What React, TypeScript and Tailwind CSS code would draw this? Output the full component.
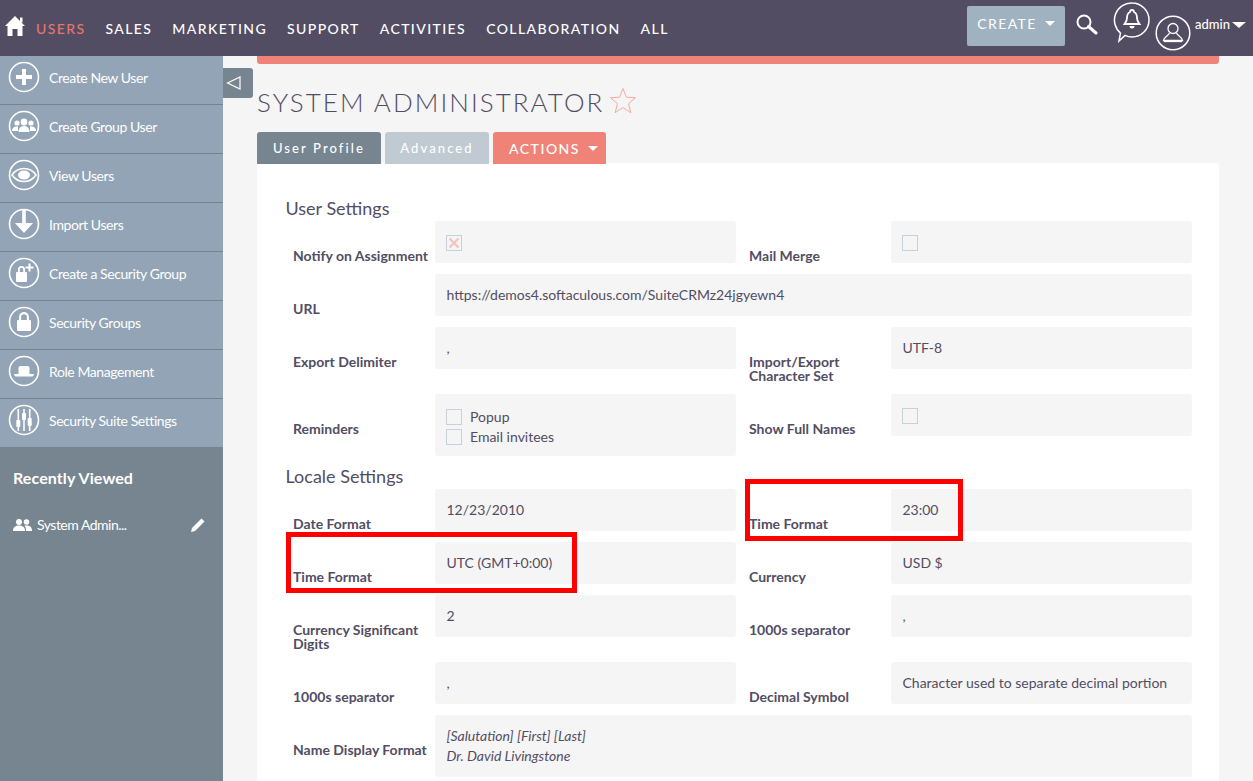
import React from "react";

const Circle: React.FC<{ children: React.ReactNode }> = ({ children }) => (
  <svg width="32" height="32" viewBox="0 0 32 32" className="shrink-0">
    <circle cx="16" cy="16" r="14.5" fill="none" stroke="#fff" strokeWidth="1.6" />
    {children}
  </svg>
);

const sideItems: { label: string; icon: React.ReactNode }[] = [
  {
    label: "Create New User",
    icon: <path d="M14 8h4v6h6v4h-6v6h-4v-6H8v-4h6z" fill="#fff" />,
  },
  {
    label: "Create Group User",
    icon: (
      <g fill="#fff">
        <circle cx="9" cy="13" r="2.6" />
        <circle cx="23" cy="13" r="2.6" />
        <path d="M4 21c0-3 2-4.500 4-4.500h2V21z" />
        <path d="M28 21c0-3-2-4.500-4-4.500h-2V21z" />
        <circle cx="16" cy="12" r="3.400" />
        <path d="M10.500 22c0-4 2.500-6 5.500-6s5.500 2 5.500 6z" />
      </g>
    ),
  },
  {
    label: "View Users",
    icon: (
      <g>
        <path d="M4 16c3-4.500 7.500-6.500 12-6.500S25 11.500 28 16c-3 4.500-7.500 6.500-12 6.500S7 20.500 4 16z" fill="none" stroke="#fff" strokeWidth="1.6" />
        <ellipse cx="16" cy="16" rx="6" ry="4.500" fill="#fff" />
      </g>
    ),
  },
  {
    label: "Import Users",
    icon: <path d="M14.200 1.500h3.600V15H25l-9 10-9-10h7.200z" fill="#fff" />,
  },
  {
    label: "Create a Security Group",
    icon: (
      <g fill="#fff">
        <rect x="8" y="15" width="11" height="10" rx="1" />
        <path d="M10 15v-2.500a3.500 3.500 0 0 1 7 0V15h-1.800v-2.500a1.700 1.700 0 0 0-3.400 0V15z" />
        <path d="M20.500 6.500h2v3h3v2h-3v3h-2v-3h-3v-2h3z" />
      </g>
    ),
  },
  {
    label: "Security Groups",
    icon: (
      <g fill="#fff">
        <rect x="9" y="14" width="14" height="11" rx="1" />
        <path d="M11 14v-3a5 5 0 0 1 10 0v3h-2.200v-3a2.800 2.800 0 0 0-5.600 0v3z" />
      </g>
    ),
  },
  {
    label: "Role Management",
    icon: (
      <g fill="#fff">
        <path d="M10.500 19v-6c0-1 .7-2 2-2h7c1.300 0 2 1 2 2v6z" />
        <path d="M6 19h20c0 1.500-1 2.500-2 2.500H8c-1 0-2-1-2-2.500z" />
      </g>
    ),
  },
  {
    label: "Security Suite Settings",
    icon: (
      <g fill="#fff">
        <rect x="9.500" y="5" width="1.600" height="22" />
        <rect x="15.200" y="5" width="1.600" height="22" />
        <rect x="20.900" y="5" width="1.600" height="22" />
        <rect x="8.300" y="16" width="4" height="7" rx="0.800" />
        <rect x="14" y="9" width="4" height="7" rx="0.800" />
        <rect x="19.700" y="14" width="4" height="8" rx="0.800" />
      </g>
    ),
  },
];

const navItems = ["SALES", "MARKETING", "SUPPORT", "ACTIVITIES", "COLLABORATION", "ALL"];

const TopBar = () => (
  <header className="h-[56px] shrink-0 bg-[#534d64] flex items-start">
    <svg width="22" height="22" viewBox="0 0 22 22" className="ml-[4px] mt-[15px] shrink-0">
      <path d="M11 1 L21 11 H18.500 V21 H13.500 V14 H8.500 V21 H3.500 V11 H1 Z" fill="#fff" />
      <rect x="16" y="2.500" width="2.500" height="5" fill="#fff" />
    </svg>
    <nav className="flex gap-[20px] ml-[10px] mt-[20px] text-[14px] leading-[18px] tracking-[1.4px] font-medium text-white">
      <span className="text-[#e2766f]">USERS</span>
      {navItems.map((n) => (
        <span key={n}>{n}</span>
      ))}
    </nav>
    <div className="ml-auto flex items-start">
      <button className="mt-[6px] w-[98px] h-[40px] pb-[5px] rounded-[2px] bg-[#a0b2bf] text-white text-[14px] tracking-[1.4px] flex items-center justify-center gap-[8px]">
        CREATE
        <span className="w-0 h-0 border-x-[5.5px] border-x-transparent border-t-[5px] border-t-white" />
      </button>
      <svg width="24" height="22" viewBox="0 0 24 22" className="ml-[10px] mt-[13px]">
        <circle cx="9" cy="9" r="6.500" fill="none" stroke="#fff" strokeWidth="2" />
        <path d="M13.500 13.500 L21 20" stroke="#fff" strokeWidth="3" strokeLinecap="round" />
      </svg>
      <svg width="38" height="42" viewBox="0 0 38 42" className="ml-[14px] mt-[1px]">
        <path d="M19 2a17 17 0 0 1 0 34 17 17 0 0 1-7-1.600L6 40l1.500-8A17 17 0 0 1 19 2z" fill="none" stroke="#fff" strokeWidth="1.500" />
        <path d="M19 9a2 2 0 0 1 2 2c2.500 1 3 3 3 6 0 3 1 4 2.500 6h-15C13 21 14 20 14 17c0-3 .5-5 3-6a2 2 0 0 1 2-2z" fill="none" stroke="#fff" strokeWidth="1.800" />
        <path d="M16.500 25h5a2.500 2.500 0 0 1-5 0z" fill="#fff" />
      </svg>
      <svg width="36" height="36" viewBox="0 0 36 36" className="ml-[4px] mt-[15px]">
        <circle cx="18" cy="18" r="16.800" fill="none" stroke="#fff" strokeWidth="1.500" />
        <circle cx="18" cy="13.500" r="5" fill="none" stroke="#fff" strokeWidth="1.300" />
        <path d="M14.500 18c-1 3-5 3.500-6 7.500h19c-1-4-5-4.500-6-7.500" fill="none" stroke="#fff" strokeWidth="1.300" />
        <path d="M9 26.500h18" stroke="#fff" strokeWidth="1.300" />
      </svg>
      <span className="ml-[4px] mt-[15px] text-white text-[13px] leading-[18px] font-medium">admin</span>
      <span className="ml-[2px] mr-[7px] mt-[22px] w-0 h-0 border-x-[7px] border-x-transparent border-t-[6px] border-t-white" />
    </div>
  </header>
);

const Sidebar = () => (
  <aside className="w-[223px] shrink-0 flex flex-col bg-[#778591]">
    <ul className="bg-[#92a4b5]">
      {sideItems.map((s, i) => (
        <li
          key={s.label}
          className={
            "flex items-start gap-[9px] pl-[8px] pt-[5px] text-white text-[14px] leading-[20px] tracking-[-0.42px] " +
            (i < sideItems.length - 1 ? "h-[49px] border-b border-[#74838f]" : "h-[48px]")
          }
        >
          <Circle>{s.icon}</Circle>
          <span className="mt-[7px]">{s.label}</span>
        </li>
      ))}
    </ul>
    <h3 className="mt-[21px] ml-[13px] text-white font-bold text-[16px] leading-[20px] tracking-[0.1px]">Recently Viewed</h3>
    <div className="mt-[27px] ml-[13px] flex items-center text-white text-[14px] leading-[20px] tracking-[-0.5px]">
      <svg width="19" height="12" viewBox="0 0 19 12" className="shrink-0">
        <g fill="#fff">
          <circle cx="6" cy="3" r="3" />
          <circle cx="13.500" cy="3" r="2.800" />
          <path d="M0 12c0-4 2.500-5.500 6-5.500s6 1.500 6 5.500z" />
          <path d="M13 12h6c0-4-2.200-5.500-5.500-5.500-.8 0-1.500.1-2.100.3C12.800 8 13 10 13 12z" />
        </g>
      </svg>
      <span className="ml-[5px]">System Admin...</span>
      <svg width="16" height="16" viewBox="0 0 16 16" className="ml-[63px] shrink-0">
        <path d="M11.500 1.500l3 3L5 14l-4 1 1-4z" fill="#fff" />
      </svg>
    </div>
  </aside>
);

const Label: React.FC<{ children: React.ReactNode }> = ({ children }) => (
  <div className="w-[142px] shrink-0 pt-[28px] text-[14px] leading-[14px] font-bold text-[#534d64]">{children}</div>
);

const Box: React.FC<{ children?: React.ReactNode; wide?: boolean; tall?: boolean }> = ({ children, wide, tall }) => (
  <div
    className={
      "rounded-[3px] bg-[#f5f5f5] px-[11.5px] text-[14px] leading-[20px] text-[#534d64] pt-[11px] " +
      (wide ? "w-[757px] " : "w-[301px] ") +
      (tall ? "h-[62px]" : "h-[42px]")
    }
  >
    {children}
  </div>
);

const Check: React.FC<{ checked?: boolean }> = ({ checked }) => (
  <span className="-ml-[0.5px] w-[16px] h-[16px] border border-[#c8d1d9] bg-[#f5f5f5] shrink-0 flex items-center justify-center">
    {checked && (
      <svg width="12" height="12" viewBox="0 0 12 12">
        <path d="M1.500 1.500l9 9M10.500 1.500l-9 9" stroke="#f4c4be" strokeWidth="2.400" />
      </svg>
    )}
  </span>
);

const Row: React.FC<{ children: React.ReactNode }> = ({ children }) => (
  <div className="flex items-start ml-[36px] mb-[11px]">{children}</div>
);

const Gap = () => <div className="w-[13px] shrink-0" />;

const Section: React.FC<{ children: React.ReactNode }> = ({ children }) => (
  <h2 className="ml-[28.5px] -mt-[2px] mb-[2px] h-[22px] text-[18px] leading-[22px] text-[#534d64] font-normal">{children}</h2>
);

const Content = () => (
  <main className="relative flex-1 min-w-0 bg-[#f5f5f5] px-[34px]">
    <div className="h-[8px] bg-[#f08377] rounded-b-[3px]" />
    <button className="absolute left-0 top-[12px] w-[30px] h-[30px] pl-[3px] bg-[#778591] rounded-r-[3px] flex items-center justify-start">
      <svg width="15" height="14" viewBox="0 0 15 14">
        <path d="M14 1v12L1.500 7z" fill="none" stroke="#fff" strokeWidth="1.200" />
      </svg>
    </button>
    <div className="mt-[20px] h-[36px] flex items-center text-[#534d64]">
      <h1 className="text-[26px] font-light tracking-[2.05px] leading-[36px]">SYSTEM ADMINISTRATOR</h1>
      <svg width="28" height="27" viewBox="0 0 28 27" className="ml-[5px] -mt-[3px]">
        <path d="M14 1.500l3.400 8.700 9.100.5-7 5.900 2.300 9-7.800-5-7.800 5 2.300-9-7-5.900 9.100-.5z" fill="none" stroke="#f4978c" strokeWidth="0.800" />
      </svg>
    </div>
    <div className="relative z-10 mt-[12px] flex items-start gap-[4px] text-white">
      <span className="w-[124px] h-[32px] pt-[1px] bg-[#778591] rounded-t-[3px] flex items-center justify-center text-[13px] tracking-[2.1px] font-medium">User Profile</span>
      <span className="w-[104px] h-[32px] pt-[1px] bg-[#bfcad3] rounded-t-[3px] flex items-center justify-center text-[13px] tracking-[2.1px] font-medium">Advanced</span>
      <span className="w-[113px] h-[32px] pl-[16px] bg-[#f08377] rounded-t-[3px] flex items-center gap-[8px] text-[14px] tracking-[1.5px] font-medium">
        ACTIONS
        <span className="w-0 h-0 border-x-[5.5px] border-x-transparent border-t-[5px] border-t-white" />
      </span>
    </div>
    <div className="relative -mt-[1px] bg-white h-[640px] pt-[36px] rounded-tr-[3px]">
      <Section>User Settings</Section>
      <Row>
        <Label>Notify on Assignment</Label>
        <Box><div className="pt-[3px]"><Check checked /></div></Box>
        <Gap />
        <Label>Mail Merge</Label>
        <Box><div className="pt-[3px]"><Check /></div></Box>
      </Row>
      <Row>
        <Label>URL</Label>
        <Box wide>https://demos4.softaculous.com/SuiteCRMz24jgyewn4</Box>
      </Row>
      <Row>
        <Label>Export Delimiter</Label>
        <Box>,</Box>
        <Gap />
        <Label>Import/Export<br />Character Set</Label>
        <Box>UTF-8</Box>
      </Row>
      <Row>
        <Label>Reminders</Label>
        <Box tall>
          <div className="flex items-center gap-[8px] h-[20px] mt-[2px]"><Check />Popup</div>
          <div className="flex items-center gap-[8px] h-[20px]"><Check />Email invitees</div>
        </Box>
        <Gap />
        <Label>Show Full Names</Label>
        <Box><div className="pt-[3px]"><Check /></div></Box>
      </Row>
      <Section>Locale Settings</Section>
      <Row>
        <Label>Date Format</Label>
        <Box>12/23/2010</Box>
        <Gap />
        <Label>Time Format</Label>
        <Box>23:00</Box>
      </Row>
      <Row>
        <Label>Time Format</Label>
        <Box>UTC (GMT+0:00)</Box>
        <Gap />
        <Label>Currency</Label>
        <Box>USD $</Box>
      </Row>
      <Row>
        <Label>Currency Significant Digits</Label>
        <Box>2</Box>
        <Gap />
        <Label>1000s separator</Label>
        <Box>,</Box>
      </Row>
      <Row>
        <Label>1000s separator</Label>
        <Box>,</Box>
        <Gap />
        <Label>Decimal Symbol</Label>
        <Box>Character used to separate decimal portion</Box>
      </Row>
      <Row>
        <Label>Name Display Format</Label>
        <Box wide tall>
          <div className="italic">[Salutation] [First] [Last]</div>
          <div className="italic">Dr. David Livingstone</div>
        </Box>
      </Row>
      <div className="absolute left-[488px] top-[316px] w-[218px] h-[62px] border-[5px] border-[#ff0000]" />
      <div className="absolute left-[29px] top-[369px] w-[291px] h-[61px] border-[5px] border-[#ff0000]" />
    </div>
  </main>
);

export default function App() {
  return (
    <div className="w-[1253px] h-[781px] overflow-hidden flex flex-col font-['Lato',sans-serif]">
      <TopBar />
      <div className="flex flex-1 min-h-0">
        <Sidebar />
        <Content />
      </div>
    </div>
  );
}
